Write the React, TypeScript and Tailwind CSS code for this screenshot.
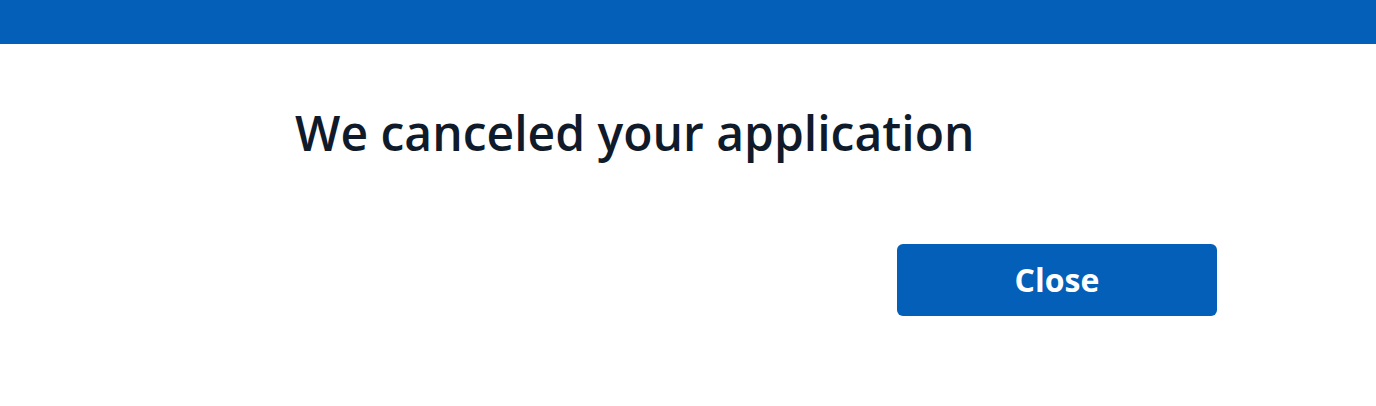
import React from 'react';

export default function App() {
  return (
    <div className="min-h-screen bg-white font-['Open_Sans',sans-serif]">
      {/* Верхняя полоса */}
      <div className="h-[44px] bg-[#035fb8]" />

      <div className="ml-[295px] w-[922px] pt-[57px]">
        <h1 className="text-[48px] leading-[64px] font-semibold text-[#0f1a2a]">
          We canceled your application
        </h1>
        <div className="flex justify-end mt-[79px]">
          <button className="w-[320px] h-[72px] rounded-[6px] bg-[#035fb8] text-white text-[32px] font-bold">
            Close
          </button>
        </div>
      </div>
    </div>
  );
}
